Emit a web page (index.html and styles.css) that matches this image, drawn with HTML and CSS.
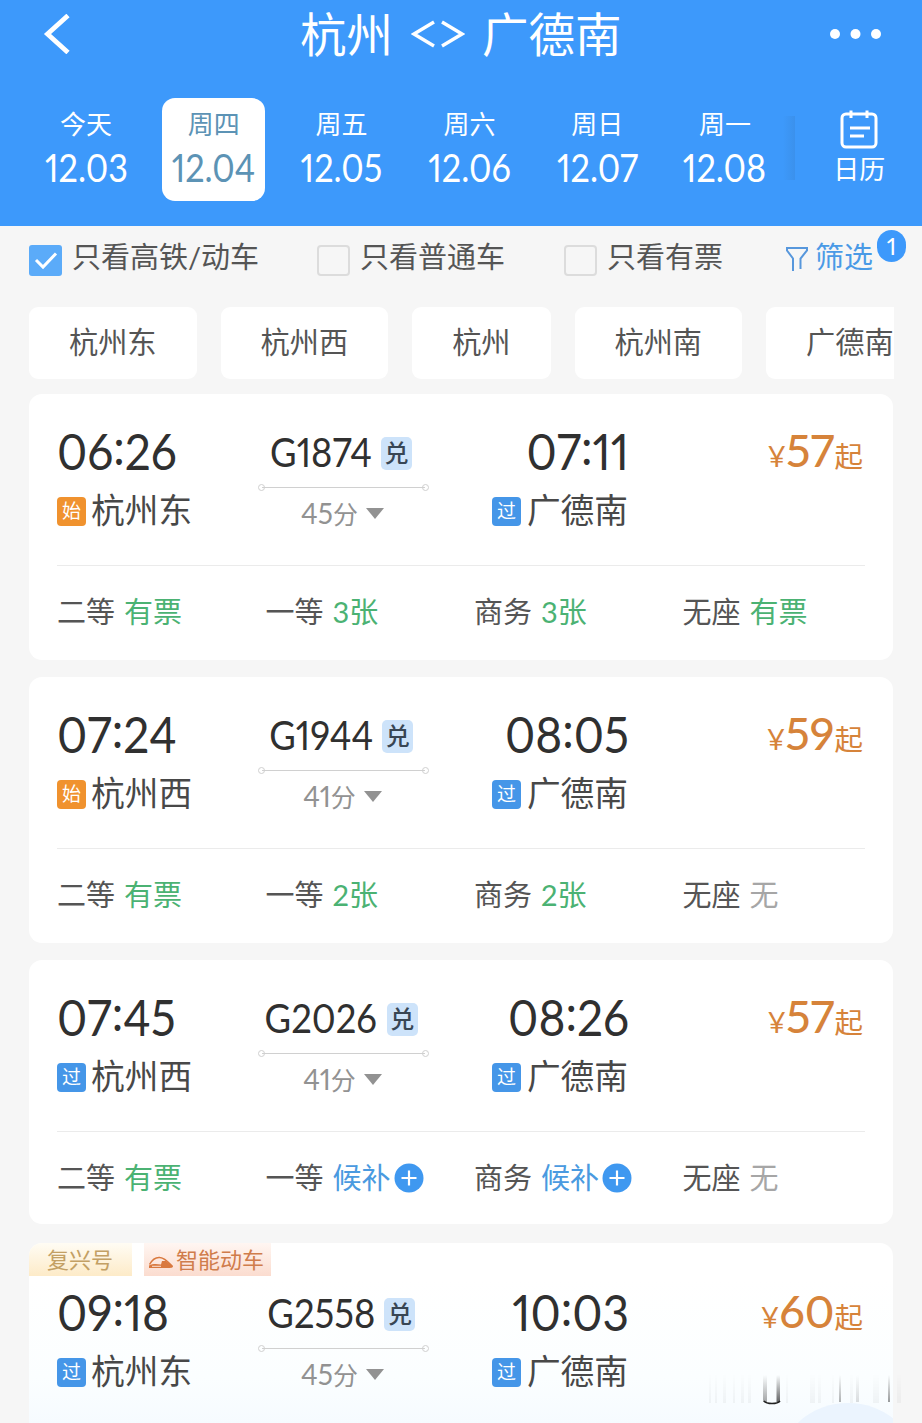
FILE: index.html
```html
<!DOCTYPE html>
<html lang="zh-CN">
<head>
    <meta charset="UTF-8">
    <meta name="viewport" content="width=device-width, initial-scale=1.0">
    <title>杭州 - 广德南</title>
    <link rel="stylesheet" href="styles.css">
</head>
<body>

<header class="header">
    <div class="title-bar">
        <svg class="back" width="28" height="40" viewBox="0 0 28 40"><path d="M25 1.500L4.500 20L25 38.500" fill="none" stroke="#fff" stroke-width="4.800"/></svg>
        <h1>杭州<svg class="swap" width="54" height="30" viewBox="0 0 54 30"><path d="M23 3L3 15L23 27M31 3L51 15L31 27" fill="none" stroke="#fff" stroke-width="3.400"/></svg>广德南</h1>
        <svg class="more" width="54" height="12" viewBox="0 0 54 12" fill="#fff"><circle cx="6" cy="6" r="5"/><circle cx="26.500" cy="6" r="5"/><circle cx="47" cy="6" r="5"/></svg>
    </div>
    <nav class="dates">
        <a class="date"><span>今天</span><b>12.03</b></a>
        <a class="date active"><span>周四</span><b>12.04</b></a>
        <a class="date"><span>周五</span><b>12.05</b></a>
        <a class="date"><span>周六</span><b>12.06</b></a>
        <a class="date"><span>周日</span><b>12.07</b></a>
        <a class="date"><span>周一</span><b>12.08</b></a>
        <i class="shade"></i>
        <a class="calendar">
            <svg width="40" height="40" viewBox="0 0 40 40" fill="none" stroke="#fff" stroke-width="3"><rect x="3" y="4" width="34" height="33" rx="4"/><path d="M12 0.500V8M28 0.500V8M11 18H31M11 26H25"/></svg>
            <span>日历</span>
        </a>
    </nav>
</header>

<div class="filters">
    <label class="check"><svg class="box on" width="33" height="31" viewBox="0 0 33 31"><path d="M7 15L14 22L27 8.500" fill="none" stroke="#fff" stroke-width="3"/></svg>只看高铁/动车</label>
    <label class="check"><i class="box"></i>只看普通车</label>
    <label class="check"><i class="box"></i>只看有票</label>
    <a class="filter">
        <svg width="24" height="26" viewBox="0 0 24 26"><path d="M8 25V12.500L2 4.500V2H22V4.500L15.500 12.500V23" fill="none" stroke="#5797dc" stroke-width="2"/></svg>
        筛选<em class="count">1</em>
    </a>
</div>

<div class="stations">
    <a>杭州东</a><a>杭州西</a><a>杭州</a><a>杭州南</a><a>广德南</a>
</div>

<main class="list">
    <section class="card">
        <div class="trip">
            <div class="from">
                <div class="time">06<i>:</i>26</div>
                <div class="station"><i class="mark start">始</i>杭州东</div>
            </div>
            <div class="route">
                <div class="number"><b>G1874</b><i class="exchange">兑</i></div>
                <div class="line"></div>
                <div class="duration">45<span>分</span><i class="arrow"></i></div>
            </div>
            <div class="to">
                <div class="time">07<i>:</i>11</div>
                <div class="station"><i class="mark">过</i>广德南</div>
            </div>
            <div class="price"><small>¥</small><b>57</b><span>起</span></div>
        </div>
        <div class="seats">
            <div>二等<span class="yes">有票</span></div>
            <div>一等<span class="yes"><b>3</b>张</span></div>
            <div>商务<span class="yes"><b>3</b>张</span></div>
            <div>无座<span class="yes">有票</span></div>
        </div>
    </section>

    <section class="card">
        <div class="trip">
            <div class="from">
                <div class="time">07<i>:</i>24</div>
                <div class="station"><i class="mark start">始</i>杭州西</div>
            </div>
            <div class="route">
                <div class="number"><b>G1944</b><i class="exchange">兑</i></div>
                <div class="line"></div>
                <div class="duration">41<span>分</span><i class="arrow"></i></div>
            </div>
            <div class="to">
                <div class="time">08<i>:</i>05</div>
                <div class="station"><i class="mark">过</i>广德南</div>
            </div>
            <div class="price"><small>¥</small><b>59</b><span>起</span></div>
        </div>
        <div class="seats">
            <div>二等<span class="yes">有票</span></div>
            <div>一等<span class="yes"><b>2</b>张</span></div>
            <div>商务<span class="yes"><b>2</b>张</span></div>
            <div>无座<span class="no">无</span></div>
        </div>
    </section>

    <section class="card short">
        <div class="trip">
            <div class="from">
                <div class="time">07<i>:</i>45</div>
                <div class="station"><i class="mark">过</i>杭州西</div>
            </div>
            <div class="route">
                <div class="number"><b>G2026</b><i class="exchange">兑</i></div>
                <div class="line"></div>
                <div class="duration">41<span>分</span><i class="arrow"></i></div>
            </div>
            <div class="to">
                <div class="time">08<i>:</i>26</div>
                <div class="station"><i class="mark">过</i>广德南</div>
            </div>
            <div class="price"><small>¥</small><b>57</b><span>起</span></div>
        </div>
        <div class="seats">
            <div>二等<span class="yes">有票</span></div>
            <div>一等<span class="wait">候补</span><svg class="plus" width="30" height="30" viewBox="0 0 30 30"><circle cx="15" cy="15" r="14.500" fill="#3f98f0"/><path d="M15 7.500V22.500M7.500 15H22.500" stroke="#fff" stroke-width="2.200"/></svg></div>
            <div>商务<span class="wait">候补</span><svg class="plus" width="30" height="30" viewBox="0 0 30 30"><circle cx="15" cy="15" r="14.500" fill="#3f98f0"/><path d="M15 7.500V22.500M7.500 15H22.500" stroke="#fff" stroke-width="2.200"/></svg></div>
            <div>无座<span class="no">无</span></div>
        </div>
    </section>

    <section class="card last">
        <div class="tags">
            <span class="tag gold">复兴号</span>
            <span class="tag smart"><svg width="26" height="14" viewBox="0 0 26 14"><path d="M1.500 8.500C4 4 8 1 12 1.500C17 2 21 7 24.500 10.500" fill="none" stroke="#d9793f" stroke-width="1.500"/><path d="M1 12V9.500C5 7.500 9 8 13 8.500L14 5L18 5L25 10.500C25 12 22 12 18 12Z" fill="#d9793f"/><path d="M4 10.300H13" stroke="#fbe3d8"/></svg>智能动车</span>
        </div>
        <div class="trip">
            <div class="from">
                <div class="time">09<i>:</i>18</div>
                <div class="station"><i class="mark">过</i>杭州东</div>
            </div>
            <div class="route">
                <div class="number"><b>G2558</b><i class="exchange">兑</i></div>
                <div class="line"></div>
                <div class="duration">45<span>分</span><i class="arrow"></i></div>
            </div>
            <div class="to">
                <div class="time">10<i>:</i>03</div>
                <div class="station"><i class="mark">过</i>广德南</div>
            </div>
            <div class="price"><small>¥</small><b>60</b><span>起</span></div>
        </div>
        <i class="bubble"></i>
    </section>
</main>

<!-- faded streaks over the bottom right corner -->
<svg class="streaks" width="210" height="35" viewBox="0 0 210 35">
    <defs>
        <linearGradient id="fade" x1="0" y1="0" x2="0" y2="1">
            <stop offset="0" stop-color="#222" stop-opacity="0"/>
            <stop offset="1" stop-color="#222"/>
        </linearGradient>
    </defs>
    <g fill="url(#fade)">
        <g opacity="0.040"><rect x="8" y="0" width="2" height="28"/><rect x="14" y="0" width="2" height="28"/><rect x="22" y="0" width="3" height="28"/><rect x="32" y="0" width="2" height="28"/><rect x="40" y="0" width="3" height="28"/><rect x="47" y="0" width="3" height="28"/><rect x="85" y="0" width="2" height="28"/><rect x="109" y="0" width="5" height="28"/><rect x="117" y="0" width="3" height="28"/><rect x="131" y="0" width="2" height="28"/><rect x="149" y="0" width="3" height="28"/><rect x="172" y="0" width="6" height="28"/><rect x="196" y="0" width="4" height="28"/></g>
        <rect x="62" y="0" width="4" height="27" opacity="0.400"/>
        <rect x="75.500" y="0" width="3.500" height="27" opacity="0.700"/>
        <rect x="138" y="0" width="2" height="27" opacity="0.350"/>
        <rect x="155" y="0" width="3" height="27" opacity="0.150"/>
        <rect x="187" y="0" width="2" height="27" opacity="0.450"/>
    </g>
    <path d="M63 26Q65 28.500 71 28.500Q77 28.500 79 26" fill="none" stroke="#222" stroke-width="1.600"/>
</svg>

</body>
</html>
```
FILE: styles.css
```css
* {
    box-sizing: border-box;
}
body {
    position: relative;
    width: 922px;
    height: 1423px;
    margin: 0;
    overflow: hidden;
    background: #f6f6f6;
    color: #555;
    font-family: Lato, "Noto Sans CJK SC", sans-serif;
    font-feature-settings: "pnum";
    font-weight: 400;
}
i, em {
    font-style: normal;
}
b {
    font-weight: 400;
}
svg {
    flex: none;
}

/* Header */
.header {
    height: 226px;
    background: #3d99fb;
    color: #fff;
}
.title-bar {
    display: flex;
    align-items: center;
    height: 68px;
    padding: 0 39px 0 43px;
}
.title-bar h1 {
    display: flex;
    align-items: center;
    margin: 0 auto 0 229px;
    font-size: 46.500px;
    line-height: 68px;
    font-weight: 400;
}
.swap {
    margin: 0 17px 0 18px;
}
.dates {
    display: flex;
    padding: 30px 0 0 34.500px;
}
.date {
    width: 103px;
    height: 103px;
    margin-right: 24.800px;
    padding-top: 8px;
    border-radius: 13px;
    text-align: center;
}
.date span {
    display: block;
    font-size: 26px;
    line-height: 36px;
}
.date b {
    display: block;
    font-size: 38px;
    line-height: 50px;
    transform: scaleX(0.9);
}
.date.active {
    background: #fff;
    color: #5c93b5;
}
.shade {
    width: 12px;
    height: 64px;
    margin: 18px 0 0 -18px;
    background: linear-gradient(to right, rgba(60, 140, 230, 0), #3b91ec);
}
.calendar {
    display: flex;
    flex-direction: column;
    align-items: center;
    width: 60px;
    margin: 12px 0 0 34px;
    font-size: 26px;
    line-height: 38px;
}

/* Filters */
.filters {
    display: flex;
    height: 65px;
    padding-left: 29px;
    font-size: 29px;
    line-height: 62px;
}
.check {
    display: flex;
    white-space: nowrap;
}
.check:nth-child(1) {
    width: 288px;
}
.check:nth-child(2) {
    width: 247px;
}
.check:nth-child(3) {
    width: 220px;
}
.box {
    width: 33px;
    height: 31px;
    margin: 19px 10px 0 0;
    border: 2px solid #dcdcdc;
    border-radius: 4px;
}
.box.on {
    border: 0;
    border-radius: 3px;
    background: #5babf9;
}
.filter {
    position: relative;
    display: flex;
    color: #4a9ae6;
}
.filter svg {
    margin: 20px 6px 0 1px;
}
.count {
    position: absolute;
    left: 93px;
    top: 4px;
    width: 29px;
    height: 32px;
    border-radius: 15px;
    background: #3d99fb;
    color: #fff;
    font-size: 24px;
    line-height: 31px;
    text-align: center;
}
.stations {
    display: flex;
    gap: 24px;
    width: 865px;
    margin: 16px 0 0 29px;
    overflow: hidden;
}
.stations a {
    flex: none;
    height: 72px;
    padding: 0 40px;
    border-radius: 9px;
    background: #fff;
    font-size: 29.200px;
    line-height: 70px;
}

/* Train cards */
.list {
    display: flex;
    flex-direction: column;
    gap: 17px;
    margin: 15px 29px 0;
}
.card {
    height: 266px;
    padding: 0 28px;
    border-radius: 13px;
    background: #fff;
}
.card.short {
    height: 264px;
    margin-bottom: 2px;
}
.trip {
    display: grid;
    grid-template-columns: 201px 171px 199px 235px;
    height: 171px;
    padding-top: 27px;
}
.time {
    height: 60px;
    color: #303030;
    font-size: 50px;
    line-height: 60px;
    font-kerning: none;
    transform: scaleX(0.92);
    transform-origin: left;
}
.time i {
    line-height: 0;
    vertical-align: 5px;
}
.to .time {
    margin-right: -1px;
    text-align: right;
    transform-origin: right;
}
.station {
    display: flex;
    align-items: center;
    height: 58px;
    color: #484848;
    font-size: 33.700px;
    line-height: 58px;
}
.to .station {
    justify-content: flex-end;
}
.mark {
    width: 29px;
    height: 29px;
    margin: 2px 5px 0 0;
    border-radius: 4px;
    background: #4596e8;
    color: #fff;
    font-size: 19px;
    line-height: 28px;
    text-align: center;
}
.to .mark {
    margin-right: 6px;
}
.mark.start {
    background: #f0922e;
}
.number {
    display: flex;
    justify-content: center;
    align-items: center;
    height: 62px;
    padding-right: 5px;
    color: #303030;
    font-size: 40px;
}
.number b {
    margin: 0 -5px;
    transform: scaleX(0.91);
}
.exchange {
    width: 31px;
    height: 33px;
    margin: 2px 0 0 9px;
    border-radius: 5px;
    background: #cde3fa;
    color: #384654;
    font-size: 24px;
    font-weight: 500;
    line-height: 32px;
    text-align: center;
}
.line {
    display: flex;
    justify-content: space-between;
    align-items: center;
    height: 8px;
    background: linear-gradient(#d0d0d0, #d0d0d0) center / 163px 1px no-repeat;
}
.line::before, .line::after {
    content: "";
    width: 5px;
    height: 5px;
    border: 1px solid #d0d0d0;
    border-radius: 50%;
}
.duration {
    display: flex;
    justify-content: center;
    align-items: center;
    height: 44px;
    padding-right: 2px;
    color: #929292;
    font-size: 28px;
}
.duration span {
    font-size: 25px;
}
.arrow {
    margin: 1px 0 0 8px;
    border: 9.500px solid transparent;
    border-top: 11px solid #929292;
    border-bottom: 0;
}
.price {
    display: flex;
    justify-content: flex-end;
    align-items: baseline;
    height: 60px;
    color: #d6833a;
    font-size: 28.500px;
    line-height: 58px;
}
.price small {
    font-size: 28px;
}
.price b {
    font-size: 45px;
    font-weight: 500;
}
.seats {
    display: grid;
    grid-template-columns: 208.500px 208.500px 208.500px auto;
    border-top: 1px solid #ebebeb;
    font-size: 29px;
    line-height: 91px;
}
.seats div {
    display: flex;
    white-space: nowrap;
}
.seats span {
    margin-left: 9px;
}
.yes {
    color: #4bb273;
}
.wait {
    color: #4a9ae0;
}
.no {
    color: #a6a6a6;
}
.plus {
    margin: 31px 0 0 3px;
}

.last {
    position: relative;
    overflow: hidden;
    height: 180px;
    padding: 0;
    border-radius: 13px 13px 0 0;
    background: linear-gradient(#fff 20%, #fbfeff 75%, #f6fbff);
}
.last .trip {
    height: 147px;
    padding: 6px 28px 0;
}
.tags {
    display: flex;
    gap: 12px;
    height: 33px;
}
.tag {
    display: flex;
    align-items: center;
    font-size: 22px;
    line-height: 33px;
}
.gold {
    width: 103px;
    padding-left: 18px;
    background: linear-gradient(#fffcf4, #fdebc8);
    color: #c3a064;
}
.smart {
    width: 127px;
    padding-left: 4px;
    background: linear-gradient(#fff6f2, #fbdccf);
    color: #d07c4b;
}
.smart svg {
    margin: 7px 2px 0 0;
}
.bubble {
    position: absolute;
    left: 754px;
    top: 160px;
    width: 130px;
    height: 110px;
    border-radius: 50%;
    background: #ebf4fe;
}
.streaks {
    position: absolute;
    left: 701px;
    top: 1375px;
}
```
